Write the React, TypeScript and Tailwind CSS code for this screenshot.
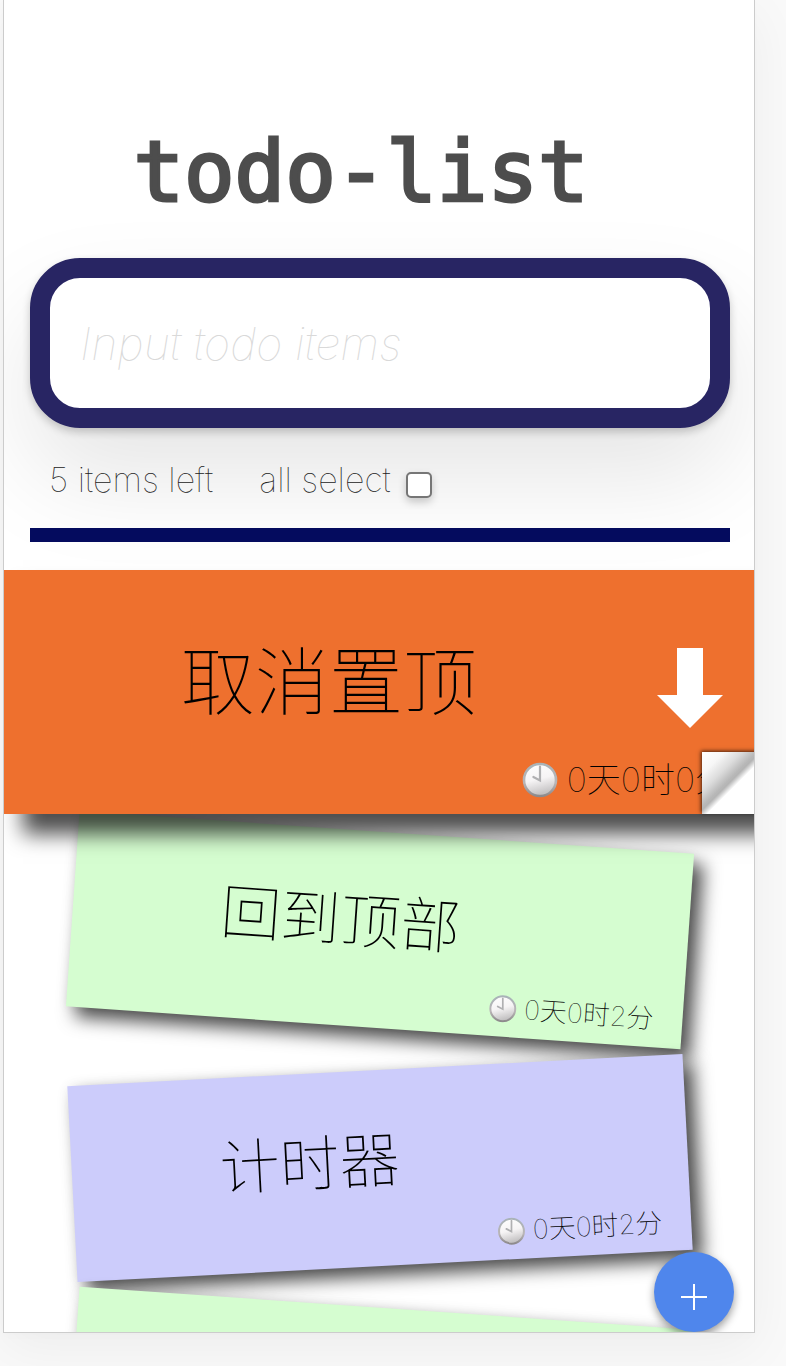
import React from "react";

type NoteProps = {
  title?: string;
  time?: string;
  box: string;
  upright?: string;
};

function Clock({ className }: { className: string }) {
  return (
    <svg viewBox="0 0 36 36" className={className} aria-hidden="true">
      <defs>
        <linearGradient id="face" x1="0" y1="0" x2="0.25" y2="1">
          <stop offset="0" stopColor="#ffffff" />
          <stop offset="0.55" stopColor="#f6f4f5" />
          <stop offset="1" stopColor="#c4c2c3" />
        </linearGradient>
        <linearGradient id="rim" x1="0" y1="0" x2="0" y2="1">
          <stop offset="0" stopColor="#a9b3b8" />
          <stop offset="0.6" stopColor="#b9b5b6" />
          <stop offset="1" stopColor="#8d8a8c" />
        </linearGradient>
      </defs>
      <circle cx="18" cy="18" r="16" fill="url(#face)" stroke="url(#rim)" strokeWidth="2.6" />
      <path d="M18 4.5V18.5L11.4 15" fill="none" stroke="#b0b0b2" strokeWidth="2.2" strokeLinecap="round" />
    </svg>
  );
}

function Note({ title, time, box, upright }: NoteProps) {
  return (
    <li
      className={`mr-[66px] ml-[68px] flex h-[196px] shrink-0 flex-col justify-between pt-[58px] pb-[12px] shadow-[10px_10px_18px_rgba(0,0,0,0.7),0_0_12px_rgba(0,0,0,0.05)] ${box}`}
    >
      {title && <p className="pl-[148px] text-[60px] leading-[64px]">{title}</p>}
      {time && (
        <div className="flex items-center justify-end gap-[7px] pr-[29px]">
          <Clock className={`size-[28px] ${upright}`} />
          <time className="text-[27px] leading-[32px]">{time}</time>
        </div>
      )}
    </li>
  );
}

export default function App() {
  return (
    <div className="flex h-screen flex-col bg-[#f9f9f9] pr-[31px] pb-[33px] pl-[3px] font-['Helvetica_Neue','Inter','Noto_Sans_CJK_SC',sans-serif] font-thin text-black">
      <main className="relative flex min-h-0 flex-1 flex-col overflow-hidden border border-t-0 border-[#cccccc] bg-white shadow-[0_4px_8px_rgba(0,0,0,0.01),0_15px_50px_rgba(0,0,0,0.05)]">
        <header className="flex shrink-0 flex-col pt-[122px] pr-[24px] pl-[26px]">
          <h1 className="pr-[38px] text-center font-['DejaVu_Sans_Mono',monospace] text-[84px] leading-[100px] font-normal text-[#4d4d4d] [-webkit-text-stroke:3px_#4d4d4d]">
            todo-list
          </h1>
          <input
            type="text"
            aria-label="Input todo items"
            placeholder="Input todo items"
            className="mt-[36px] h-[170px] w-full rounded-[50px] border-[20px] border-[#282563] bg-white px-[30px] text-[45px] shadow-[0_4px_8px_rgba(0,0,0,0.2),0_50px_100px_rgba(0,0,0,0.1)] outline-none placeholder:text-[#d9d9d9] placeholder:italic"
          />
          <div className="flex h-[100px] items-center gap-[46px] pt-[3px] pl-[19px] text-[34px] leading-[44px] text-[#222222]">
            <span>5 items left</span>
            <label className="flex items-center gap-[15px]">
              all select
              <input
                type="checkbox"
                className="mt-[10px] size-[26px] appearance-none rounded-[5px] border-2 border-[#767676] bg-white shadow-[0_4px_8px_rgba(0,0,0,0.2)] checked:bg-[#282563]"
              />
            </label>
          </div>
          <div className="h-[14px] bg-[#040b5e]" />
        </header>

        <ul className="mt-[28px] flex min-h-0 flex-1 flex-col gap-[42px]">
          <li className="relative z-10 mr-[-10px] mb-[-24px] flex h-[244px] shrink-0 flex-col justify-between bg-[#ee702e] pt-[66px] pb-[14px] shadow-[19px_20px_20px_rgba(0,0,0,0.7)]">
            <div className="flex items-center justify-between pr-[41px] pl-[177px]">
              <p className="text-[74px] leading-[88px]">取消置顶</p>
              <button type="button" aria-label="取消置顶" className="mt-[12px]">
                <svg viewBox="0 0 66 80" className="h-[80px] w-[66px]" aria-hidden="true">
                  <path d="M20 0H46V47H66L33 80L0 47H20Z" fill="#ffffff" />
                </svg>
              </button>
            </div>
            <div className="flex items-center justify-end gap-[9px] pr-[35px]">
              <Clock className="size-[36px]" />
              <time className="text-[34px] leading-[40px]">0天0时0分</time>
            </div>
            <span className="absolute right-0 bottom-0 size-[62px] bg-[linear-gradient(135deg,#ffffff_0%,#f7f7f7_18%,#dcdcdc_32%,#b8b8b8_44%,#b4b4b4_47%,#ffffff_54%,#ffffff_100%)] shadow-[-1px_-1px_4px_rgba(0,0,0,0.7)]" />
          </li>
          <Note title="回到顶部" time="0天0时2分" box="rotate-[4deg] bg-[#d5fdd0]" upright="rotate-[-4deg]" />
          <Note title="计时器" time="0天0时2分" box="rotate-[-3deg] bg-[#ccccfb]" upright="rotate-[3deg]" />
          <Note box="rotate-[4deg] bg-[#d5fdd0]" />
        </ul>

        <button
          type="button"
          aria-label="+"
          className="absolute right-[20px] bottom-0 z-20 flex size-[80px] items-center justify-center rounded-full bg-[#4f86ec] pt-[10px] shadow-[0_4px_8px_rgba(0,0,0,0.4)]"
        >
          <svg viewBox="0 0 26 26" className="size-[26px]" aria-hidden="true">
            <path d="M13 0V26M0 13H26" stroke="#ffffff" strokeWidth="2" />
          </svg>
        </button>
      </main>
    </div>
  );
}
